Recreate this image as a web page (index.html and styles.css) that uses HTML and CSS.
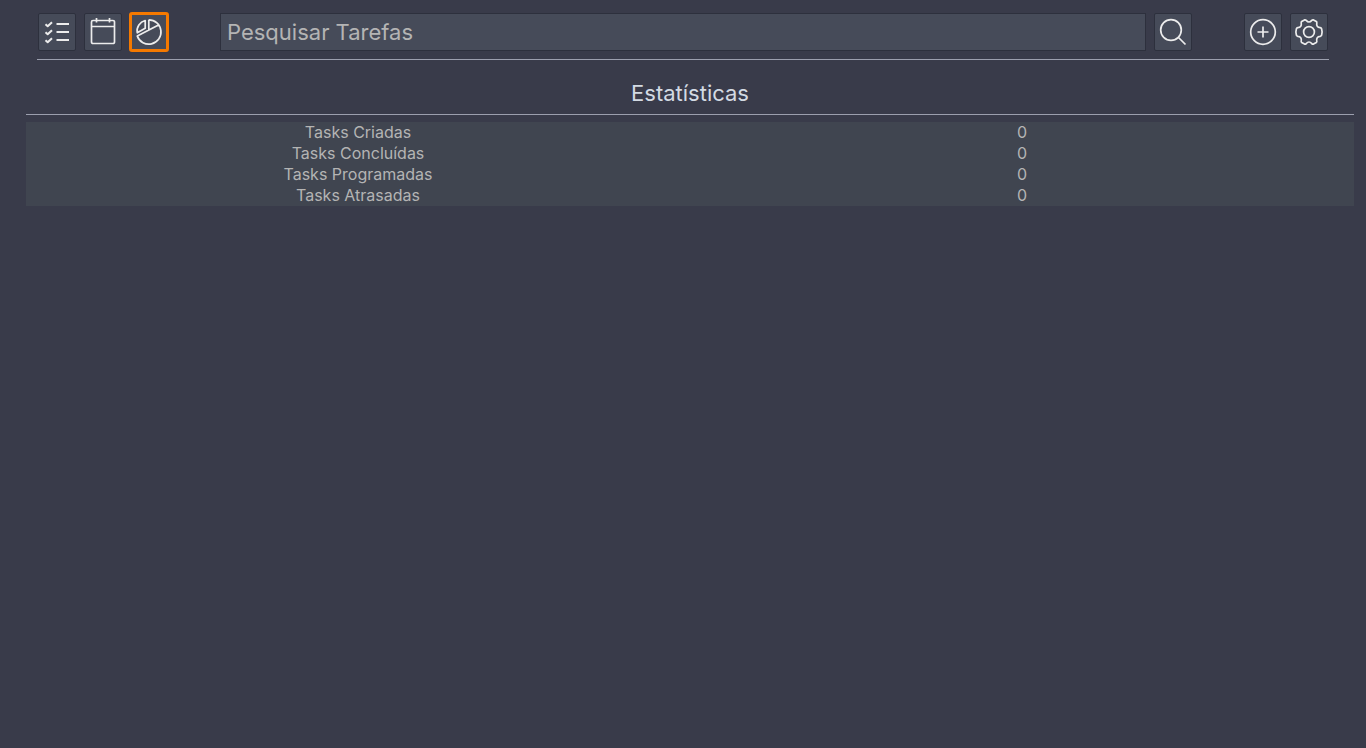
FILE: index.html
```
<!DOCTYPE html>
<html lang="pt-BR">
<head>
<meta charset="utf-8">
<title>Tarefas</title>
<link rel="stylesheet" href="styles.css">
</head>
<body>
<header class="toolbar">
  <nav class="group" aria-label="Seções">
    <button class="tool" type="button" aria-label="Lista">
      <svg class="icon icon-bold" viewBox="0 0 36 36"><path d="M17.500 10H30M17.500 18H30M17.500 26H30M6.500 10.200l2.200 2 4.300-4M6.500 18.200l2.200 2 4.300-4M6.500 26.200l2.200 2 4.300-4"/></svg>
    </button>
    <button class="tool" type="button" aria-label="Calendário">
      <svg class="icon" viewBox="0 0 36 36"><path d="M8 6.500h20a1.500 1.500 0 0 1 1.500 1.500v20a1.500 1.500 0 0 1-1.500 1.500H8A1.500 1.500 0 0 1 6.500 28V8A1.500 1.500 0 0 1 8 6.500zM6.500 12.500h23M11.500 4v4.500M24.500 4v4.500"/></svg>
    </button>
    <button class="tool tool-active" type="button" aria-label="Estatísticas" aria-current="page">
      <svg class="icon" viewBox="0 0 36 36"><path d="M17.800 5.800A12.200 12.200 0 1 1 6.300 22.100L28.500 10.500M17.800 5.800V16M14.200 6.500V14.200L6.300 18.800C5.200 13 9 8 14.200 6.500z"/></svg>
    </button>
  </nav>
  <form class="search" role="search">
    <input class="search-field" type="text" placeholder="Pesquisar Tarefas" aria-label="Pesquisar Tarefas">
    <button class="tool" type="button" aria-label="Pesquisar">
      <svg class="icon" viewBox="0 0 36 36"><circle cx="16" cy="16" r="10.300"/><path d="M23.500 23.500l7 7"/></svg>
    </button>
  </form>
  <div class="group">
    <button class="tool" type="button" aria-label="Adicionar">
      <svg class="icon" viewBox="0 0 36 36"><circle cx="18" cy="18" r="12.300"/><path d="M12.500 18h11M18 12.500v11"/></svg>
    </button>
    <button class="tool" type="button" aria-label="Configurações">
      <svg class="icon" viewBox="0 0 36 36"><circle cx="18" cy="18" r="5.400"/><path d="M13.500 5.900Q14.500 5.600 15.200 6.400Q18 9.600 20.800 6.400Q21.500 5.600 22.500 5.900L25.300 7.500Q26 8.100 25.800 9Q25 13.200 29.200 13.700Q30.200 13.900 30.600 14.800Q31.600 18 30.600 21.200Q30.200 22.100 29.200 22.300Q25 22.800 25.800 27Q26 27.900 25.300 28.500L22.500 30.100Q21.500 30.400 20.800 29.600Q18 26.400 15.200 29.600Q14.500 30.400 13.500 30.100L10.700 28.500Q10 27.900 10.200 27Q11 22.800 6.800 22.300Q5.800 22.100 5.400 21.200Q4.400 18 5.400 14.800Q5.800 13.900 6.800 13.700Q11 13.200 10.200 9Q10 8.100 10.700 7.500Z"/></svg>
    </button>
  </div>
</header>
<main class="stats">
  <h1 class="title">Estatísticas</h1>
  <table class="table">
    <tbody>
      <tr><th scope="row">Tasks Criadas</th><td>0</td></tr>
      <tr><th scope="row">Tasks Concluídas</th><td>0</td></tr>
      <tr><th scope="row">Tasks Programadas</th><td>0</td></tr>
      <tr><th scope="row">Tasks Atrasadas</th><td>0</td></tr>
    </tbody>
  </table>
</main>
</body>
</html>
```
FILE: styles.css
```
* {
  box-sizing: border-box;
}

body {
  margin: 0;
  min-height: 100vh;
  background: #393b4a;
  color: #d3dae3;
  font-family: Inter, "Liberation Sans", sans-serif;
}

.toolbar {
  display: flex;
  gap: 52px;
  margin: 0 37px;
  padding: 13px 1px 8px;
  border-bottom: 1px solid #9c9fae;
}

.group {
  display: flex;
  gap: 8px;
}

.search {
  display: flex;
  flex: 1;
  gap: 8px;
}

.tool {
  flex: none;
  width: 38px;
  height: 38px;
  padding: 0;
  border: 1px solid #2d303d;
  border-radius: 2px;
  background: #464b59;
  color: #ececec;
}

.tool-active {
  outline: 3px solid #f57900;
  outline-offset: -2px;
}

.icon {
  display: block;
  width: 36px;
  height: 36px;
  fill: none;
  stroke: currentColor;
  stroke-width: 1.700;
  stroke-linejoin: round;
}

.icon-bold {
  stroke-width: 2;
}

.search-field {
  flex: 1;
  min-width: 0;
  height: 38px;
  padding: 0 6px;
  border: 1px solid #2d303d;
  background: #464b59;
  color: #d3dae3;
  font: 22px Inter, "Liberation Sans", sans-serif;
}

.search-field::placeholder {
  color: #b4b4b4;
  opacity: 1;
}

.stats {
  padding: 19px 12px 0 26px;
}

.title {
  margin: 0 0 7px;
  padding-bottom: 7px;
  border-bottom: 1px solid #9c9fae;
  font-size: 22px;
  font-weight: 400;
  line-height: 28px;
  text-align: center;
}

.table {
  width: 100%;
  table-layout: fixed;
  border-collapse: collapse;
  background: #404550;
  color: #b4b4b4;
  font-size: 16px;
  line-height: 21px;
}

.table th,
.table td {
  padding: 0;
  font-weight: 400;
  text-align: center;
}
```
